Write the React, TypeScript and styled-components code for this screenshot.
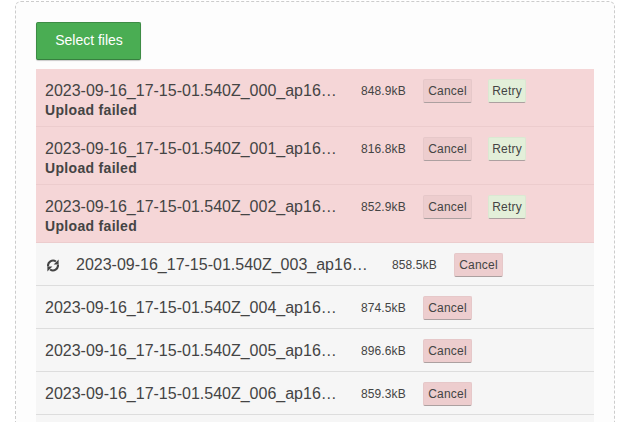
import React from "react";
import styled, { createGlobalStyle } from "styled-components";

const GlobalStyle = createGlobalStyle`
  html, body {
    margin: 0;
    height: 422px;
    overflow: hidden;
    background: #fff;
    font-family: "Liberation Sans", Arial, sans-serif;
  }
`;

const Page = styled.div`
  padding: 1px 10px 0 15px;
  height: 421px;
  overflow: hidden;
`;

const DropZone = styled.div`
  border: 1px dashed #ccc;
  border-radius: 6px;
  background: #fdfdfd;
  padding: 20px 20px 0 20px;
  width: 558px;
  height: 600px;
`;

const SelectButton = styled.div`
  box-sizing: border-box;
  width: 105px;
  height: 38px;
  padding: 0 0 2px 1px;
  display: flex;
  align-items: center;
  justify-content: center;
  background: #4aad53;
  border: 1px solid #3d8c45;
  border-bottom-color: #37803f;
  border-radius: 2px;
  box-shadow: 0 1px 1px rgba(0, 0, 0, 0.2);
  color: #fff;
  font-size: 14px;
  margin-bottom: 9px;
`;

const List = styled.ul`
  list-style: none;
  margin: 0;
  padding: 0;
`;

const Row = styled.li<{ $failed?: boolean }>`
  box-sizing: border-box;
  height: ${(p) => (p.$failed ? "58px" : "43px")};
  padding: 10px 9px 0;
  background: ${(p) => (p.$failed ? "#f5d6d7" : "#f6f6f6")};
  border-bottom: 1px solid ${(p) => (p.$failed ? "#eccccd" : "#dddddd")};
  color: #444;
`;

const RowMain = styled.div`
  display: flex;
  align-items: center;
  height: 24px;
`;

const SpinnerIcon = styled.svg`
  width: 12px;
  height: 13px;
  margin: 0 17px 0 2px;
  flex: none;
  fill: #444;
  stroke: #444;
`;

const FileName = styled.span`
  width: 293px;
  flex: none;
  font-size: 16px;
  white-space: nowrap;
  margin-right: 23px;
`;

const FileSize = styled.span`
  width: 45px;
  flex: none;
  font-size: 12px;
  letter-spacing: 0.1px;
  margin-right: 17px;
`;

const ActionButton = styled.div<{ $retry?: boolean }>`
  box-sizing: border-box;
  height: 24px;
  display: flex;
  align-items: center;
  justify-content: center;
  font-size: 12px;
  letter-spacing: 0.2px;
  color: #444;
  width: ${(p) => (p.$retry ? "38px" : "49px")};
  margin-right: 16px;
  background: ${(p) => (p.$retry ? "#e3efd9" : "#edcdce")};
  border: 1px solid ${(p) => (p.$retry ? "#dbe8d2" : "#e6c8c9")};
  border-bottom-color: #aca0a0;
  border-radius: 2px;
`;

const Status = styled.div`
  font-size: 14px;
  font-weight: bold;
  letter-spacing: 0.32px;
  line-height: 14px;
`;

const Spinner = () => (
  <SpinnerIcon viewBox="0 0 12 13">
    <path d="M1.1 7.4 A5 5 0 0 1 8.9 2.5" fill="none" strokeWidth="2.1" />
    <path d="M11.6 0.4 V5.6 H6.6 Z" strokeWidth="0" />
    <path d="M10.9 5.6 A5 5 0 0 1 3.1 10.5" fill="none" strokeWidth="2.1" />
    <path d="M0.4 12.6 V7.4 H5.4 Z" strokeWidth="0" />
  </SpinnerIcon>
);

type FileState = "failed" | "uploading" | "queued";

const files: { id: string; size: string; state: FileState }[] = [
  { id: "000", size: "848.9kB", state: "failed" },
  { id: "001", size: "816.8kB", state: "failed" },
  { id: "002", size: "852.9kB", state: "failed" },
  { id: "003", size: "858.5kB", state: "uploading" },
  { id: "004", size: "874.5kB", state: "queued" },
  { id: "005", size: "896.6kB", state: "queued" },
  { id: "006", size: "859.3kB", state: "queued" },
];

export default function App() {
  return (
    <Page>
      <GlobalStyle />
      <DropZone>
        <SelectButton>Select files</SelectButton>
        <List>
          {files.map((f) => (
            <Row key={f.id} $failed={f.state === "failed"}>
              <RowMain>
                {f.state === "uploading" && <Spinner />}
                <FileName>{`2023-09-16_17-15-01.540Z_${f.id}_ap16…`}</FileName>
                <FileSize>{f.size}</FileSize>
                <ActionButton>Cancel</ActionButton>
                {f.state === "failed" && <ActionButton $retry>Retry</ActionButton>}
              </RowMain>
              {f.state === "failed" && <Status>Upload failed</Status>}
            </Row>
          ))}
          {/* next row is cut off by the window, only its top edge shows */}
          <Row />
        </List>
      </DropZone>
    </Page>
  );
}
